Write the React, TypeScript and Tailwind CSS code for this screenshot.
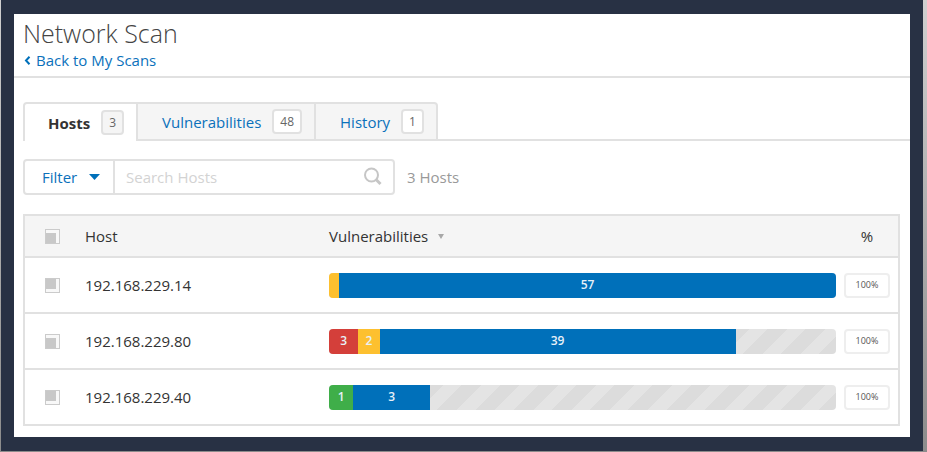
type Segment = { label: string; share: number; color: string };
type Host = { ip: string; segments: Segment[]; progress: string; tick: string };

const BLUE = 'bg-[#0070ba]';
const YELLOW = 'bg-[#fdc02f]';
const RED = 'bg-[#d43f3a]';
const GREEN = 'bg-[#3fae49]';

const hosts: Host[] = [
  {
    ip: '192.168.229.14',
    segments: [
      { label: '', share: 2, color: YELLOW },
      { label: '57', share: 98, color: BLUE },
    ],
    progress: '100%',
    tick: 'bg-left-top',
  },
  {
    ip: '192.168.229.80',
    segments: [
      { label: '3', share: 5.8, color: RED },
      { label: '2', share: 4.2, color: YELLOW },
      { label: '39', share: 70.2, color: BLUE },
    ],
    progress: '100%',
    tick: 'bg-left-bottom',
  },
  {
    ip: '192.168.229.40',
    segments: [
      { label: '1', share: 4.8, color: GREEN },
      { label: '3', share: 15.1, color: BLUE },
    ],
    progress: '100%',
    tick: 'bg-left-top',
  },
];

const tabs = [
  { name: 'Hosts', count: 3, active: true },
  { name: 'Vulnerabilities', count: 48, active: false },
  { name: 'History', count: 1, active: false },
];

function Tick({ label, tick }: { label: string; tick: string }) {
  return (
    <input
      type="checkbox"
      aria-label={label}
      className={`block size-[15px] appearance-none border border-[#cbcbcb] bg-[#f8f8f8] bg-[linear-gradient(#c8c8c8,#c8c8c8)] bg-[length:10px_10px] bg-no-repeat ${tick}`}
    />
  );
}

function Tabs() {
  return (
    <div role="tablist" className="flex pl-[9px]">
      {tabs.map((tab) => (
        <button
          key={tab.name}
          role="tab"
          aria-selected={tab.active}
          className={`flex h-[39px] items-center gap-[11px] border-t-2 border-r-2 border-[#e1e1e1] pr-3 first:rounded-tl first:border-l-2 last-of-type:rounded-tr ${
            tab.active
              ? 'bg-white pl-[23px] font-bold text-[#333]'
              : 'border-b-2 bg-[#f5f5f5] pl-6 text-[#0b71bb]'
          }`}
        >
          {tab.name}
          <span
            className={`flex h-[25px] items-center justify-center rounded border-2 border-[#e1e1e1] px-[6px] text-xs font-normal text-[#666] ${
              tab.active ? 'bg-[#f5f5f5]' : 'bg-white'
            }`}
          >
            {tab.count}
          </span>
        </button>
      ))}
      <div className="flex-1 border-b-2 border-[#e1e1e1]" />
    </div>
  );
}

function Toolbar() {
  return (
    <div className="mt-[18px] flex items-center gap-3 pl-[9px]">
      <div className="flex h-9 w-[372px] items-stretch rounded border-2 border-[#e1e1e1]">
        <button className="flex w-[90px] shrink-0 items-center gap-3 border-r-2 border-[#e1e1e1] pl-[17px] text-[#0b71bb]">
          Filter
          <svg width="11" height="6" viewBox="0 0 11 6" fill="#0070ba" aria-hidden="true">
            <path d="M0 0H11L5.500 6Z" />
          </svg>
        </button>
        <input
          type="search"
          aria-label="Search Hosts"
          placeholder="Search Hosts"
          className="w-0 flex-1 bg-transparent pl-[11px] outline-none placeholder:text-[#d3d3d3]"
        />
        <svg
          className="mr-[10px] self-center"
          width="20"
          height="20"
          viewBox="0 0 20 20"
          fill="none"
          stroke="#c6c6c6"
          aria-hidden="true"
        >
          <circle cx="8.500" cy="8" r="6.500" strokeWidth="2" />
          <path d="M13 12.500L17.500 17" strokeWidth="3" />
        </svg>
      </div>
      <span className="text-[#999]">3 Hosts</span>
    </div>
  );
}

function Bar({ segments }: { segments: Segment[] }) {
  return (
    <div className="flex h-[25px] overflow-hidden rounded bg-[repeating-linear-gradient(135deg,#e4e4e4_0,#e4e4e4_13px,#dcdcdc_13px,#dcdcdc_27px)] text-xs font-semibold text-[#e8f1f8]">
      {segments.map((segment) => (
        <div
          key={segment.color}
          className={`flex items-center justify-center ${segment.color}`}
          style={{ width: `${segment.share}%` }}
        >
          {segment.label}
        </div>
      ))}
    </div>
  );
}

function HostTable() {
  return (
    <div className="pt-[19px] pr-[10px] pb-[11px] pl-[9px] text-[#333]">
      <div className="border-2 border-[#e1e1e1]">
        <table className="w-full table-fixed border-collapse">
          <thead>
            <tr className="h-[41px] border-b-2 border-[#e1e1e1] bg-[#f5f5f5] text-left">
              <th className="w-[60px] pl-5">
                <Tick label="Select all hosts" tick="bg-left-bottom" />
              </th>
              <th className="w-[244px] font-normal">Host</th>
              <th className="font-normal">
                <button className="flex items-center gap-[10px]">
                  Vulnerabilities
                  <svg width="6" height="5" viewBox="0 0 6 5" fill="#a8a8a8" aria-hidden="true">
                    <path d="M0 0H6L3 5Z" />
                  </svg>
                </button>
              </th>
              <th className="w-[62px] text-center font-normal">%</th>
            </tr>
          </thead>
          <tbody>
            {hosts.map((host) => (
              <tr key={host.ip} className="h-14 border-b-2 border-[#e1e1e1] last:h-[55px] last:border-b-0">
                <td className="pl-5">
                  <Tick label={`Select ${host.ip}`} tick={host.tick} />
                </td>
                <td>{host.ip}</td>
                <td>
                  <Bar segments={host.segments} />
                </td>
                <td className="pl-2">
                  <div className="flex h-[25px] w-[46px] items-center justify-center rounded border-2 border-[#eee] text-[9px] text-[#555]">
                    {host.progress}
                  </div>
                </td>
              </tr>
            ))}
          </tbody>
        </table>
      </div>
    </div>
  );
}

export default function App() {
  return (
    <div className="bg-linear-to-b from-[#d0d0d0] to-[#8c8c8c] pr-1 pb-px pl-px font-['Open_Sans','Noto_Sans',sans-serif] text-[15px] leading-5">
      <div className="bg-[#283144] px-[13px] py-[14px]">
        <main className="bg-white">
          <header className="border-b-2 border-[#e1e1e1] pb-[6px] pl-[9px]">
            <h1 className="pt-[2px] text-[25px] leading-[34px] font-light text-[#444]">Network Scan</h1>
            <a href="#scans" className="flex items-center gap-1 text-[#0b71bb]">
              <svg width="9" height="9" viewBox="0 0 9 9" fill="none" stroke="#0070ba" strokeWidth="2" aria-hidden="true">
                <path d="M6.500 0.800L3 4.500L6.500 8.200" />
              </svg>
              Back to My Scans
            </a>
          </header>
          <div className="pt-[24px]">
            <Tabs />
            <Toolbar />
            <HostTable />
          </div>
        </main>
      </div>
    </div>
  );
}
